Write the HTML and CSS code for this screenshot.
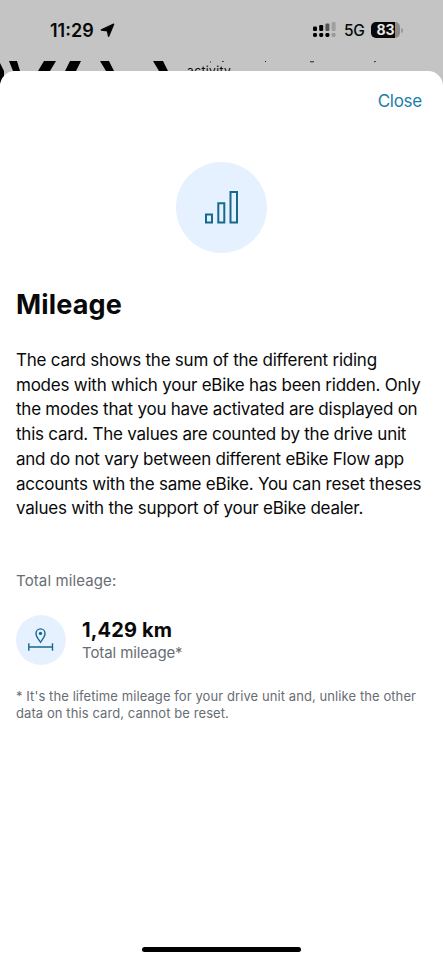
FILE: index.html
```html
<!DOCTYPE html>
<html lang="en">
<head>
<meta charset="utf-8">
<meta name="viewport" content="width=device-width, initial-scale=1">
<title>Mileage</title>
<link rel="stylesheet" href="styles.css">
</head>
<body>
<div class="screen">
  <header class="status">
    <div class="status-left">
      <span class="time">11:29</span>
      <svg class="location" width="15" height="15" viewBox="0 0 15 15"><path d="M13.6 1.2 8.6 13.2 7.5 7.8 1.4 7Z" stroke="#090909" stroke-width="1.5" stroke-linejoin="round"/></svg>
    </div>
    <div class="status-right">
      <svg width="24" height="16" viewBox="0 0 24 16">
        <rect y="4.5" width="4" height="4.5" rx="1.2"/><rect x="6.2" y="3" width="4" height="6" rx="1.2"/>
        <rect x="12.4" y="1.5" width="4" height="7.5" rx="1.2" fill="#555"/><rect x="18.6" width="4" height="9" rx="1.2" fill="#a0a0a0"/>
        <rect y="11" width="4" height="4" rx="1.4"/><rect x="6.2" y="11" width="4" height="4" rx="1.4"/><rect x="12.4" y="11" width="4" height="4" rx="1.4"/><rect x="18.6" y="11" width="4" height="4" rx="1.4" fill="#999"/>
      </svg>
      <span class="network">5G</span>
      <div class="battery"><span>83</span></div>
      <i class="battery-tip"></i>
    </div>
  </header>
  <div class="behind">
    <svg width="187" height="24" viewBox="0 0 187 24"><path d="M0 2 4 10v12H0ZM9 0h8l3 10h-7ZM44 0h12l-6 10H38ZM70 0h11l-5 10H65ZM100 0h9l5 10h-8ZM153 0h10l5 10h-9Z"/></svg>
    <span class="behind-text">activity</span>
    <svg class="descenders" width="220" height="3" viewBox="0 0 220 3"><path d="M23 1h1M35 .5l2-.5M78 .5h1M123 .5q2 1 4 0M187 1l2-1" fill="none" stroke="#222"/></svg>
  </div>
  <main class="sheet">
    <div class="toolbar"><a class="close">Close</a></div>
    <div class="hero">
      <svg width="36" height="36" viewBox="0 0 36 36" fill="none" stroke="#16688d" stroke-width="2"><path d="M2 24.5h6v8H2ZM14.3 13.3h6v19.2h-6ZM26.5 2H33v30.5h-6.5Z"/></svg>
    </div>
    <h1>Mileage</h1>
    <p class="description">The card shows the sum of the different riding<br>modes with which your eBike has been ridden. Only<br>the modes that you have activated are displayed on<br>this card. The values are counted by the drive unit<br>and do not vary between different eBike Flow app<br>accounts with the same eBike. You can reset theses<br>values with the support of your eBike dealer.</p>
    <h2>Total mileage:</h2>
    <section class="total">
      <div class="total-icon">
        <svg width="28" height="26" viewBox="0 0 28 26" fill="none" stroke="#16688d" stroke-width="1.4"><path d="M13.5 15.2C11.7 12.4 9 9.5 9 6.4a4.5 4.5 0 0 1 9 0c0 3.1-2.7 6-4.5 8.8ZM1.8 16.3v7.5M25.5 16.3v7.5M1.8 20h23.7"/><circle cx="13.5" cy="6.4" r="1.7" fill="#16688d" stroke="none"/></svg>
      </div>
      <div class="total-copy"><strong>1,429 km</strong><span>Total mileage*</span></div>
    </section>
    <p class="footnote">* It's the lifetime mileage for your drive unit and, unlike the other<br>data on this card, cannot be reset.</p>
    <div class="home-indicator"></div>
  </main>
</div>
</body>
</html>
```
FILE: styles.css
```css
* { box-sizing: border-box; }
body { margin: 0; font-family: Inter, "Liberation Sans", sans-serif; color: #090909; }
h1, h2, p { margin: 0; white-space: nowrap; }
svg { display: block; flex: none; }
.screen { height: 960px; background: #c4c4c4; display: flex; flex-direction: column; overflow: hidden; }
.status { height: 61px; flex: none; padding: 19px 40px 0 50px; display: flex; justify-content: space-between; }
.status-left, .status-right { display: flex; height: 22px; align-items: center; }
.time { font-size: 18px; font-weight: 600; letter-spacing: 0; width: 46px; }
.location { margin-left: 4px; }
.network { font-size: 15.5px; font-weight: 500; margin-left: 7px; letter-spacing: -.3px; width: 20px; }
.battery { width: 29px; height: 16px; margin-left: 7px; border-radius: 5px; background: linear-gradient(90deg, #090909 83%, #8b8b8b 83%); color: #e7e7e7; display: flex; align-items: center; justify-content: center; font-size: 14px; font-weight: 700; line-height: 16px; }
.battery-tip { width: 2px; height: 5px; margin-left: 1px; border-radius: 0 2px 2px 0; background: #999; }
.behind { height: 10px; flex: none; display: flex; position: relative; }
.behind-text { font-size: 12px; line-height: 20px; letter-spacing: .4px; }
.descenders { position: absolute; left: 187px; top: 0; }
.sheet { flex: 1; position: relative; background: #fff; border-radius: 15px 15px 0 0; padding: 0 16px; display: flex; flex-direction: column; }
.toolbar { height: 91px; padding: 19px 5px 0 0; text-align: right; }
.close { color: #197da9; font-size: 17px; line-height: 22px; letter-spacing: -.25px; }
.hero { width: 91px; height: 91px; border-radius: 50%; background: #e6f1ff; align-self: center; display: flex; align-items: center; justify-content: center; }
h1 { margin-top: 33px; font-size: 27px; line-height: 38px; font-weight: 700; letter-spacing: .15px; }
.description { margin-top: 24px; font-size: 17px; line-height: 24.7px; letter-spacing: -.235px; }
h2 { margin-top: 49px; font-size: 15px; line-height: 22px; font-weight: 400; color: #686d73; letter-spacing: .12px; }
.total { display: flex; height: 50px; margin-top: 23px; gap: 16px; }
.total-icon { width: 50px; height: 50px; flex: none; border-radius: 50%; background: #e6f1ff; display: flex; align-items: center; justify-content: center; }
.total-copy { display: flex; flex-direction: column; padding-top: 3px; }
.total-copy strong { font-size: 20px; line-height: 25px; letter-spacing: .15px; }
.total-copy span { font-size: 15px; line-height: 20px; color: #686d73; letter-spacing: -.1px; }
.footnote { margin-top: 23px; font-size: 13px; line-height: 16.7px; color: #686d73; letter-spacing: .085px; }
.home-indicator { width: 159px; height: 5px; margin: auto auto 8px; border-radius: 3px; background: #000; }
```
